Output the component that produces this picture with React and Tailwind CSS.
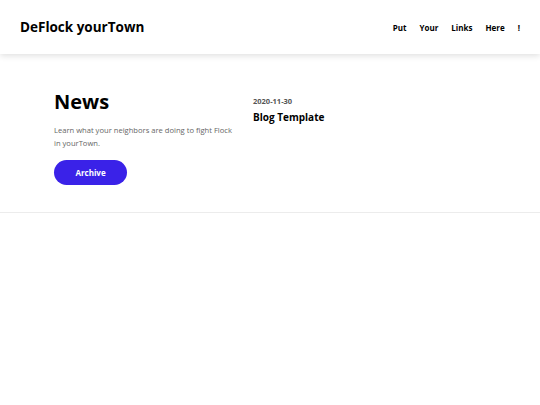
export default function App() {
  const links = ['Put', 'Your', 'Links', 'Here', '!'];
  return (
    <div className="min-h-screen bg-white text-black" style={{ fontFamily: '"Open Sans", sans-serif' }}>
      <header className="h-[54px] flex items-center justify-between pl-5 pr-5 shadow-[0_2px_6px_rgba(0,0,0,0.12)] relative z-10">
        <div className="text-[13.5px] font-bold">DeFlock yourTown</div>
        <nav className="flex items-center gap-[13px] text-[8px] font-bold pt-[2px]">
          {links.map(l => (
            <a key={l} href="#">{l}</a>
          ))}
        </nav>
      </header>

      <section className="border-b border-[#ececec] pt-[34px] pb-[27px] pl-[54px] flex">
        <div className="w-[199px]">
          <h1 className="text-[20px] font-bold leading-[28px]">News</h1>
          <p className="mt-[8px] text-[7.6px] leading-[13px] text-[#666] w-[182px]">
            Learn what your neighbors are doing to fight Flock in yourTown.
          </p>
          <button className="mt-[10px] w-[73px] h-[25px] rounded-full bg-[#3a22e8] text-white text-[8px] font-bold">
            Archive
          </button>
        </div>
        <div className="pt-[8px]">
          <div className="text-[7.5px] font-bold text-[#555]">2020-11-30</div>
          <div className="mt-[2px] text-[10px] font-bold leading-[16px]">Blog Template</div>
        </div>
      </section>
    </div>
  );
}
